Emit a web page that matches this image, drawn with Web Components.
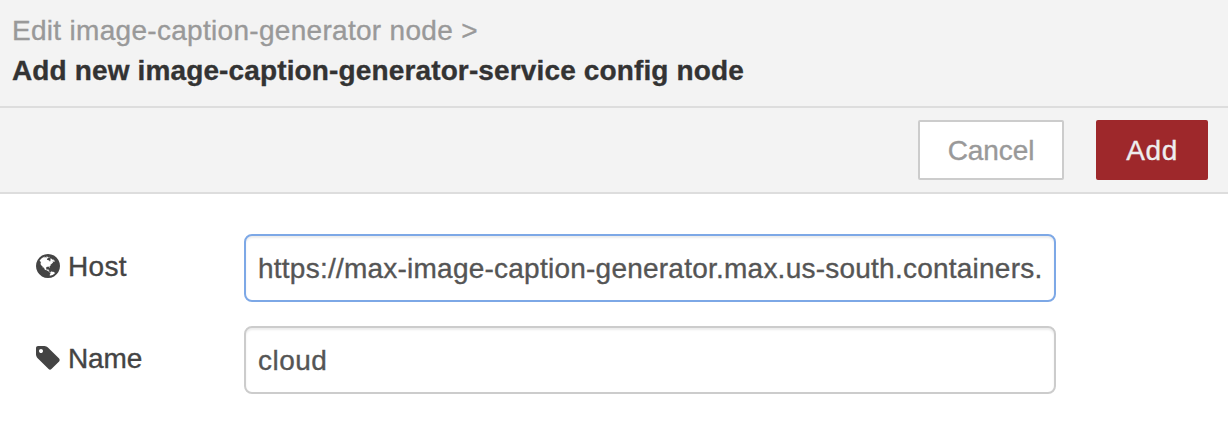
<!DOCTYPE html>
<html lang="en">
<head>
<meta charset="utf-8">
<title>Add config node</title>
<style>
  body { margin: 0; background: #fff; font: 28px/40px "Liberation Sans", Arial, sans-serif; color: #444; }
</style>
</head>
<body>
<config-editor></config-editor>

<template id="editor">
  <style>
    :host { display: block; height: 428px; overflow: hidden; -webkit-text-stroke: 0.35px currentColor; }
    main { display: flex; flex-direction: column; gap: 24px; padding: 40px 36px 0; }
    .host { letter-spacing: 0.3px; }
    .name { letter-spacing: -0.1px; }
    .url { letter-spacing: 0.235px; }
    .cloud { letter-spacing: 0.5px; }
  </style>
  <tray-header>
    <span slot="parent">Edit image-caption-generator node &gt;</span>
    <span slot="title">Add new image-caption-generator-service config node</span>
  </tray-header>
  <tray-toolbar>
    <tray-button>Cancel</tray-button>
    <tray-button primary>Add</tray-button>
  </tray-toolbar>
  <main>
    <form-row focused>
      <fa-icon slot="icon" name="globe"></fa-icon>
      <span slot="label" class="host">Host</span>
      <span class="url">https://max-image-caption-generator.max.us-south.containers.</span>
    </form-row>
    <form-row>
      <fa-icon slot="icon" name="tag"></fa-icon>
      <span slot="label" class="name">Name</span>
      <span class="cloud">cloud</span>
    </form-row>
  </main>
</template>

<template id="header">
  <style>
    :host { display: block; box-sizing: border-box; height: 108px; padding: 11px 12px 0; background: #f3f3f3; border-bottom: 2px solid #ddd; white-space: nowrap; }
    .parent { color: #999; letter-spacing: 0.3px; }
    .title { color: #333; font-weight: bold; letter-spacing: 0.135px; }
  </style>
  <div class="parent"><slot name="parent"></slot></div>
  <div class="title"><slot name="title"></slot></div>
</template>

<template id="toolbar">
  <style>
    :host { display: flex; justify-content: flex-end; gap: 32px; box-sizing: border-box; height: 86px; padding: 12px 20px; background: #f3f3f3; border-bottom: 2px solid #ddd; }
  </style>
  <slot></slot>
</template>

<template id="button">
  <style>
    :host { display: block; }
    button { display: block; box-sizing: border-box; width: 146px; height: 60px; margin: 0; padding: 1px 0 0; border: 2px solid #ccc; border-radius: 2px; background: #fff; color: #999; font: inherit; line-height: 55px; letter-spacing: -0.1px; -webkit-text-stroke: inherit; }
    :host([primary]) button { width: 112px; background: #9e282b; border-color: #9e282b; color: #eee; letter-spacing: 0.6px; }
  </style>
  <button type="button"><slot></slot></button>
</template>

<template id="row">
  <style>
    :host { display: flex; height: 68px; }
    .label { display: flex; align-items: center; gap: 8px; width: 208px; height: 64px; }
    .text { padding-top: 2px; }
    .field { display: flex; align-items: center; box-sizing: border-box; width: 812px; height: 68px; padding: 2px 12px 0; border: 2px solid #ccc; border-radius: 8px; background: #fff; box-shadow: inset 0 2px 2px rgba(0,0,0,.075); color: #555; }
    :host([focused]) .field { border-color: #7da8e6; }
    .value { flex: 1; min-width: 0; overflow: hidden; white-space: nowrap; }
  </style>
  <div class="label"><slot name="icon"></slot><div class="text"><slot name="label"></slot></div></div>
  <div class="field"><div class="value"><slot></slot></div></div>
</template>

<template id="icon">
  <style>
    :host { display: block; width: 24px; height: 24px; }
    svg { display: block; width: 24px; height: 24px; fill: #444; }
  </style>
  <svg viewBox="128 128 1536 1536" aria-hidden="true"><path/></svg>
</template>

<script>
  const ICONS = {
    globe: "M896 128q209 0 385.500 103t279.500 279.500 103 385.500-103 385.500-279.500 279.500-385.500 103-385.500-103-279.500-279.500-103-385.500 103-385.500 279.500-279.500 385.500-103zm274 521q-2 1-9.500 9.500t-13.500 9.500q2 0 4.500-5t5-11 3.500-7q6-7 22-15 14-6 52-12 34-8 51 11-2-2 9.500-13t14.500-12q3-2 15-4.500t15-7.500l2-22q-12 1-17.500-7t-6.500-21q0 2-6 8 0-7-4.500-8t-11.500 1-9 1q-10-3-15-7.500t-8-16.500-4-15q-2-5-9.500-11t-9.500-10q-1-2-2.500-5.500t-3-6.500-4-5.500-5.500-2.500-7 5-7.500 10-4.500 5q-3-2-6-1.500t-4.500 1-4.500 3-5 3.500q-3 2-8.500 3t-8.500 2q15-5-1-11-10-4-16-3 9-4 7.500-12t-8.500-14h5q-1-4-8.500-8.500t-17.500-8.500-13-6q-8-5-34-9.500t-33-.5q-5 6-4.500 10.500t4 14 3.500 12.500q1 6-5.500 13t-6.500 12q0 7 14 15.500t10 21.500q-3 8-16 16t-16 12q-5 8-1.500 18.500t10.500 16.500q2 2 1.500 4t-3.500 4.500-5.500 4-6.500 3.500l-3 2q-11 5-20.500-6t-13.500-26q-7-25-16-30-23-8-29 1-5-13-41-26-25-9-58-4 6-1 0-15-7-15-19-12 3-6 4-17.500t1-13.500q3-13 12-23 1-1 7-8.500t9.500-13.500.5-6q35 4 50-11 5-5 11.500-17t10.500-17q9-6 14-5.500t14.500 5.500 14.500 5q14 1 15.500-11t-7.500-20q12 1 3-17-4-7-8-9-12-4-27 5-8 4 2 8-1-1-9.500 10.500t-16.500 17.500-16-5q-1-1-5.500-13.500t-9.500-13.500q-8 0-16 15 3-8-11-15t-24-8q19-12-8-27-7-4-20.500-5t-19.500 4q-5 7-5.500 11.500t5 8 10.500 5.500 11.500 4 8.500 3q14 10 8 14-2 1-8.500 3.500t-11.500 4.500-6 4q-3 4 0 14t-2 14q-5-5-9-17.500t-7-16.500q7 9-25 6l-10-1q-4 0-16 2t-20.500 1-13.500-8q-4-8 0-20 1-4 4-2-4-3-11-9.500t-10-8.500q-46 15-94 41 6 1 12-1 5-2 13-6.500t10-5.500q34-14 42-7l5-5q14 16 20 25-7-4-30-1-20 6-22 12 7 12 5 18-4-3-11.500-10t-14.500-11-15-5q-16 0-22 1-146 80-235 222 7 7 12 8 4 1 5 9t2.500 11 11.500-3q9 8 3 19 1-1 44 27 19 17 21 21 3 11-10 18-1-2-9-9t-9-4q-3 5 .5 18.500t10.500 12.500q-7 0-9.500 16t-2.500 35.500-1 23.500l2 1q-3 12 5.500 34.500t21.500 19.500q-13 3 20 43 6 8 8 9 3 2 12 7.500t15 10 10 10.500q4 5 10 22.500t14 23.500q-2 6 9.500 20t10.500 23q-1 0-2.500 1t-2.500 1q3 7 15.500 14t15.500 13q1 3 2 10t3 11 8 2q2-20-24-62-15-25-17-29-3-5-5.500-15.500t-4.500-14.500q2 0 6 1.500t8.500 3.500 7.500 4 2 3q-3 7 2 17.500t12 18.500 17 19 12 13q6 6 14 19.500t0 13.500q9 0 20 10.500t17 19.500q5 8 8 26t5 24q2 7 8.500 13.500t12.500 9.500l16 8 13 7q5 2 18.500 10.500t21.500 11.500q10 4 16 4t14.500-2.500 13.500-3.500q15-2 29 15t21 21q36 19 55 11-2 1 .5 7.500t8 15.500 9 14.500 5.500 8.500q5 6 18 15t18 15q6-4 7-9-3 8 7 20t18 10q14-3 14-32-31 15-49-18 0-1-2.500-5.500t-4-8.500-2.500-8.500 0-7.500 5-3q9 0 10-3.500t-2-12.500-4-13q-1-8-11-20t-12-15q-5 9-16 8t-16-9q0 1-1.500 5.500t-1.500 6.500q-13 0-15-1 1-3 2.500-17.500t3.500-22.500q1-4 5.500-12t7.500-14.500 4-12.500-4.500-9.500-17.500-2.500q-19 1-26 20-1 3-3 10.500t-5 11.500-9 7q-7 3-24 2t-24-5q-13-8-22.500-29t-9.500-37q0-10 2.500-26.500t3-25-5.500-24.500q3-2 9-9.500t10-10.500q2-1 4.500-1.500t4.500 0 4-1.500 3-6q-1-1-4-3-3-3-4-3 7 3 28.500-1.500t27.500 1.500q15 11 22-2 0-1-2.500-9.500t-.5-13.500q5 27 29 9 3 3 15.500 5t17.500 5q3 2 7 5.500t5.500 4.500 5-.5 8.500-6.500q10 14 12 24 11 40 19 44 7 3 11 2t4.500-9.500 0-14-1.500-12.500l-1-8v-18l-1-8q-15-3-18.500-12t1.500-18.500 15-18.500q1-1 8-3.500t15.500-6.500 12.500-8q21-19 15-35 7 0 11-9-1 0-5-3t-7.500-5-4.500-2q9-5 2-16 5-3 7.500-11t7.500-10q9 12 21 2 8-8 1-16 5-7 20.500-10.500t18.500-9.500q7 2 8-2t1-12 3-12q4-5 15-9t13-5l17-11q3-4 0-4 18 2 31-11 10-11-6-20 3-6-3-9.500t-15-5.500q3-1 11.500-.5t10.500-1.500q15-10-7-16-17-5-43 12zm-163 877q206-36 351-189-3-3-12.500-4.500t-12.500-3.500q-18-7-24-8 1-7-2.500-13t-8-9-12.500-8-11-7q-2-2-7-6t-7-5.500-7.500-4.500-8.500-2-10 1l-3 1q-3 1-5.500 2.500t-5.500 3-4 3 0 2.500q-21-17-36-22-5-1-11-5.500t-10.500-7-10-1.500-11.500 7q-5 5-6 15t-2 13q-7-5 0-17.500t2-18.500q-3-6-10.500-4.500t-12 4.500-11.500 8.500-9 6.500-8.500 5.500-8.500 7.500q-3 4-6 12t-5 11q-2-4-11.500-6.500t-9.500-5.500q2 10 4 35t5 38q7 31-12 48-27 25-29 40-4 22 12 26 0 7-8 20.500t-7 21.500q0 6 2 16z",
    tag: "M576 448q0-53-37.500-90.500t-90.500-37.500-90.500 37.500-37.500 90.500 37.500 90.500 90.500 37.500 90.500-37.500 37.500-90.500zm1067 576q0 53-37 90l-491 492q-39 37-91 37-53 0-90-37l-715-716q-38-37-64.500-101t-26.500-117v-416q0-52 38-90t90-38h416q53 0 117 26.500t102 64.500l715 714q37 39 37 91z"
  };

  const define = (tag, id, setup) => customElements.define(tag, class extends HTMLElement {
    constructor() {
      super();
      this.attachShadow({ mode: "open" }).append(document.getElementById(id).content.cloneNode(true));
    }
    connectedCallback() { if (setup) setup(this); }
  });

  define("fa-icon", "icon", el => el.shadowRoot.querySelector("path").setAttribute("d", ICONS[el.getAttribute("name")]));
  define("tray-button", "button");
  define("tray-header", "header");
  define("tray-toolbar", "toolbar");
  define("form-row", "row");
  define("config-editor", "editor");
</script>
</body>
</html>
